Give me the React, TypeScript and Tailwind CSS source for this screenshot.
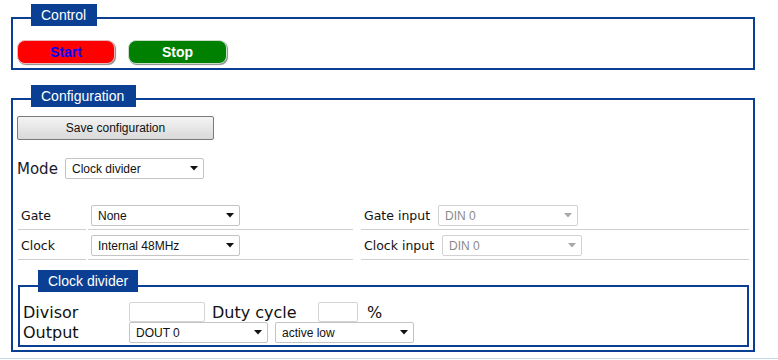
import React from "react";

const BLUE = "#0b3f93";

function Caret({ disabled }: { disabled?: boolean }) {
  return (
    <svg width="8" height="5" viewBox="0 0 8 5" className="shrink-0">
      <path d="M0 0 L8 0 L4 4.5 Z" fill={disabled ? "#a8a8a8" : "#111"} />
    </svg>
  );
}

function Select({
  value,
  width,
  disabled,
}: {
  value: string;
  width: number;
  disabled?: boolean;
}) {
  return (
    <div
      style={{ width }}
      className={
        "flex h-[21px] items-center justify-between rounded-[2px] border bg-white pl-[6px] pr-[5px] text-[12px] leading-none " +
        (disabled ? "border-[#d2d2d2] text-[#8a8a8a]" : "border-[#c4c4c4] text-[#111]")
      }
    >
      <span className="pt-[1px] font-['Liberation_Sans',Arial,sans-serif]">{value}</span>
      <Caret disabled={disabled} />
    </div>
  );
}

function Legend({ text, width, height = 22 }: { text: string; width: number; height?: number }) {
  return (
    <div
      style={{ width, height, backgroundColor: BLUE }}
      className="relative z-10 flex items-center pl-[10px] font-['Liberation_Sans',Arial,sans-serif] text-[14px] leading-none text-white"
    >
      {text}
    </div>
  );
}

export default function App() {
  return (
    <div className="h-[360px] w-[778px] overflow-hidden bg-white font-['DejaVu_Sans',Verdana,sans-serif] text-[#111]">
      <div className="flex flex-col px-[11px] pt-[4px]">
        {/* Control */}
        <div className="ml-[20px] mb-[-9px]">
          <Legend text="Control" width={66} />
        </div>
        <div className="h-[53px] w-[744px] border-2 border-[#0b3f93] pl-[4px] pt-[21px]">
          <div className="flex gap-[13px] font-['Liberation_Sans',Arial,sans-serif] text-[14px] font-bold">
            <button className="flex h-[24px] w-[98px] items-center justify-center rounded-[8px] border border-[#e8b8b8] bg-[#ff0000] text-[#0000ff] shadow-[1px_1px_1px_#8a8a8a]">
              Start
            </button>
            <button className="flex h-[24px] w-[99px] items-center justify-center rounded-[8px] border border-[#c8dcc8] bg-[#008000] text-white shadow-[1px_1px_1px_#8a8a8a]">
              Stop
            </button>
          </div>
        </div>

        {/* Configuration */}
        <div className="mt-[15px] ml-[20px] mb-[-9px]">
          <Legend text="Configuration" width={105} />
        </div>
        <div className="w-[744px] border-2 border-[#0b3f93] pb-[3px] pl-[4px] pt-[16px]">
          <button className="flex h-[24px] w-[197px] items-center justify-center rounded-[2px] border border-[#7a7a7a] bg-gradient-to-b from-[#f4f4f4] to-[#d9d9d9] font-['Liberation_Sans',Arial,sans-serif] text-[12px] text-[#111]">
            Save configuration
          </button>

          <div className="mt-[18px] flex h-[21px] items-center">
            <span className="w-[48px] pt-[2px] text-[15px] leading-none text-[#1a1a2e]">Mode</span>
            <Select value="Clock divider" width={139} />
          </div>

          {/* table */}
          <div className="mt-[21px] ml-[1px] flex flex-col text-[12.5px]">
            {[
              { l: "Gate", v: "None", rl: "Gate input" },
              { l: "Clock", v: "Internal 48MHz", rl: "Clock input" },
            ].map((r) => (
              <div key={r.l} className="flex h-[30px]">
                <div className="flex h-[30px] w-[68px] items-start border-b border-[#cfcfcf] pl-[3px] pt-[5px]">
                  <span className="flex h-[21px] items-center pt-[2px]">{r.l}</span>
                </div>
                <div className="ml-[2px] flex h-[30px] w-[265px] items-start border-b border-[#cfcfcf] pl-[3px] pt-[5px]">
                  <Select value={r.v} width={149} />
                </div>
                <div className="ml-[8px] flex h-[30px] w-[388px] items-start gap-[8px] border-b border-[#cfcfcf] pl-[3px] pt-[5px]">
                  <span className="flex h-[21px] items-center pt-[2px]">{r.rl}</span>
                  <Select value="DIN 0" width={140} disabled />
                </div>
              </div>
            ))}
          </div>

          {/* Clock divider */}
          <div className="mt-[10px] ml-[21px] mb-[-7px]">
            <Legend text="Clock divider" width={100} />
          </div>
          <div className="ml-[1px] w-[731px] border-2 border-[#0b3f93] pb-[2px] pl-[3px] pt-[15px] text-[16px]">
            <div className="flex h-[20px] items-center">
              <span className="w-[106px] pt-[1px] leading-none">Divisor</span>
              <div className="h-[20px] w-[76px] rounded-[2px] border border-[#d4d4d4] bg-white" />
              <span className="ml-[7px] w-[106px] pt-[1px] leading-none">Duty cycle</span>
              <div className="h-[20px] w-[40px] rounded-[2px] border border-[#d4d4d4] bg-white" />
              <span className="ml-[9px] pt-[1px] leading-none">%</span>
            </div>
            <div className="flex h-[21px] items-center">
              <span className="w-[106px] pt-[1px] leading-none">Output</span>
              <Select value="DOUT 0" width={139} />
              <div className="ml-[7px]">
                <Select value="active low" width={139} />
              </div>
            </div>
          </div>
        </div>
      </div>
      <div className="mt-[6px] h-px w-full bg-[#c2d8ef]" />
    </div>
  );
}
